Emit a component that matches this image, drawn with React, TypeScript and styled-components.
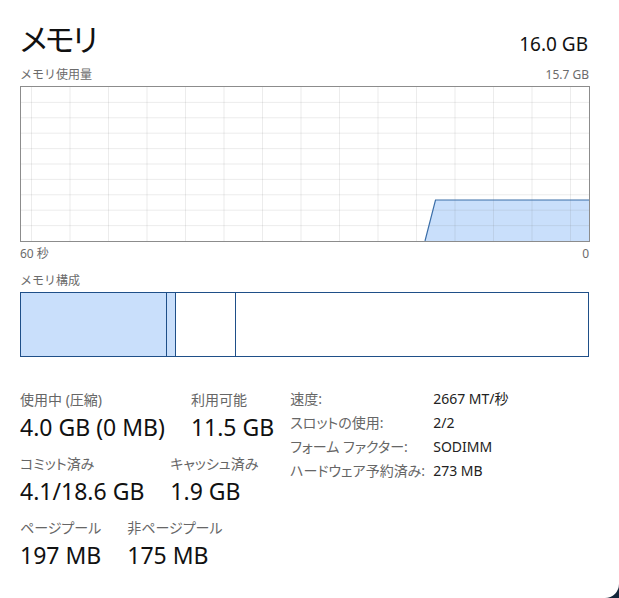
import React from "react";
import styled, { createGlobalStyle } from "styled-components";

const GlobalStyle = createGlobalStyle`
    html, body {
        margin: 0;
        padding: 0;
        background: #13263a;
    }
    body {
        font-family: "Noto Sans", "Noto Sans CJK JP", sans-serif;
        color: #1a1a1a;
    }
`;

const CHART_W = 568;
const CHART_H = 154;
const COL_STEP = 38.5;
const ROW_STEP = 15.4;

const usage = [
    [404, 154],
    [414.5, 113],
    [568, 113],
    [568, 154],
];

const stats = [
    [
        { label: "使用中 (圧縮)", value: "4.0 GB (0 MB)" },
        { label: "利用可能", value: "11.5 GB" },
    ],
    [
        { label: "コミット済み", value: "4.1/18.6 GB" },
        { label: "キャッシュ済み", value: "1.9 GB" },
    ],
    [
        { label: "ページプール", value: "197 MB" },
        { label: "非ページプール", value: "175 MB" },
    ],
];

const details = [
    { label: "速度:", value: "2667 MT/秒" },
    { label: "スロットの使用:", value: "2/2" },
    { label: "フォーム ファクター:", value: "SODIMM" },
    { label: "ハードウェア予約済み:", value: "273 MB" },
];

const UsageChart = () => {
    const cols: number[] = [];
    for (let x = 10.5; x < CHART_W; x += COL_STEP) cols.push(x);
    const rows: number[] = [];
    for (let y = ROW_STEP; y < CHART_H - 2; y += ROW_STEP) rows.push(y);

    return (
        <ChartBox>
            <svg width={CHART_W} height={CHART_H} viewBox={`0 0 ${CHART_W} ${CHART_H}`}>
                <polygon points={usage.map((p) => p.join(",")).join(" ")} fill="#c9dffb" />
                {cols.map((x) => (
                    <line key={"c" + x} x1={x} y1={0} x2={x} y2={CHART_H} stroke="rgba(120,120,120,0.14)" strokeWidth={1} />
                ))}
                {rows.map((y) => (
                    <line key={"r" + y} x1={0} y1={y} x2={CHART_W} y2={y} stroke="rgba(120,120,120,0.14)" strokeWidth={1} />
                ))}
                <polyline points={usage.slice(0, 3).map((p) => p.join(",")).join(" ")} fill="none" stroke="#3b6ea8" strokeWidth={1.2} />
            </svg>
        </ChartBox>
    );
};

export default function App() {
    return (
        <>
            <GlobalStyle />
            <Page>
                <Header>
                    <Title>メモリ</Title>
                    <Total>16.0 GB</Total>
                </Header>

                <Caption>
                    <span>メモリ使用量</span>
                    <span>15.7 GB</span>
                </Caption>
                <UsageChart />
                <Axis>
                    <span>60 秒</span>
                    <span>0</span>
                </Axis>

                <Caption>
                    <span>メモリ構成</span>
                </Caption>
                <Composition>
                    <Segment $width={146} $filled />
                    <Segment $width={9} $filled />
                    <Segment $width={60} />
                    <Segment $grow />
                </Composition>

                <Bottom>
                    <StatsColumn>
                        {stats.map((row, i) => (
                            <StatRow key={i}>
                                {row.map((s) => (
                                    <Stat key={s.label}>
                                        <StatLabel>{s.label}</StatLabel>
                                        <StatValue>{s.value}</StatValue>
                                    </Stat>
                                ))}
                            </StatRow>
                        ))}
                    </StatsColumn>
                    <Details>
                        {details.map((d) => (
                            <React.Fragment key={d.label}>
                                <DetailLabel>{d.label}</DetailLabel>
                                <DetailValue>{d.value}</DetailValue>
                            </React.Fragment>
                        ))}
                    </Details>
                </Bottom>
            </Page>
        </>
    );
}

const Page = styled.div`
    box-sizing: border-box;
    width: 619px;
    height: 598px;
    padding: 14px 30px 0 20px;
    background: #ffffff;
    border-bottom-right-radius: 14px;
    overflow: hidden;
`;

const Header = styled.div`
    display: flex;
    justify-content: space-between;
    align-items: baseline;
    height: 50px;
`;

const Title = styled.h1`
    margin: 0;
    font-family: "Noto Sans CJK JP", sans-serif;
    font-weight: 400;
    font-size: 31px;
    line-height: 48px;
    letter-spacing: -2px;
    font-feature-settings: "palt";
    color: #111;
`;

const Total = styled.span`
    font-size: 19px;
    color: #111;
    padding-right: 1px;
`;

const Caption = styled.div`
    display: flex;
    justify-content: space-between;
    font-size: 12px;
    line-height: 22px;
    color: #6b6b6b;
`;

const ChartBox = styled.div`
    width: ${CHART_W}px;
    height: ${CHART_H}px;
    border: 1px solid #8c8c8c;

    svg {
        display: block;
    }
`;

const Axis = styled(Caption)`
    line-height: 24px;
    margin-bottom: 4px;
`;

const Composition = styled.div`
    display: flex;
    width: ${CHART_W - 1}px;
    height: 63px;
    border: 1px solid #1f4f88;
`;

const Segment = styled.div<{ $width?: number; $filled?: boolean; $grow?: boolean }>`
    box-sizing: border-box;
    flex: ${(p) => (p.$grow ? "1 1 auto" : `0 0 ${p.$width}px`)};
    background: ${(p) => (p.$filled ? "#c9dffb" : "#ffffff")};
    border-right: ${(p) => (p.$grow ? "none" : "1px solid #1f4f88")};
`;

const Bottom = styled.div`
    display: flex;
    margin-top: 33px;
`;

const StatsColumn = styled.div`
    display: flex;
    flex-direction: column;
    gap: 10px;
`;

const StatRow = styled.div`
    display: flex;
    gap: 26px;
`;

const Stat = styled.div`
    display: flex;
    flex-direction: column;
`;

const StatLabel = styled.span`
    font-size: 14px;
    line-height: 20px;
    color: #666;
    font-feature-settings: "palt";
`;

const StatValue = styled.span`
    font-size: 23px;
    line-height: 34px;
    color: #111;
`;

const Details = styled.div`
    display: grid;
    grid-template-columns: 143px auto;
    grid-auto-rows: 24px;
    align-content: start;
    margin-left: 16px;
    margin-top: -3px;
    font-size: 14px;
    line-height: 24px;
`;

const DetailLabel = styled.span`
    color: #666;
    font-feature-settings: "palt";
`;

const DetailValue = styled.span`
    color: #222;
`;
